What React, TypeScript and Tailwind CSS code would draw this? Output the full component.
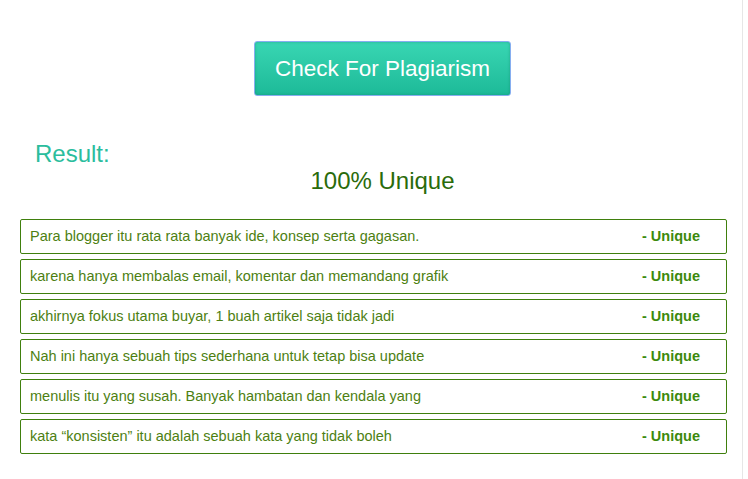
import React from "react";

const rows = [
  "Para blogger itu rata rata banyak ide, konsep serta gagasan.",
  "karena hanya membalas email, komentar dan memandang grafik",
  "akhirnya fokus utama buyar, 1 buah artikel saja tidak jadi",
  "Nah ini hanya sebuah tips sederhana untuk tetap bisa update",
  "menulis itu yang susah. Banyak hambatan dan kendala yang",
  "kata \u201ckonsisten\u201d itu adalah sebuah kata yang tidak boleh",
];

export default function App() {
  return (
    <div className="w-[748px] h-[479px] bg-white font-['Liberation_Sans',Arial,sans-serif]">
      <div className="w-[743px] h-full border-r border-[#e6e6e6] pt-[41px]">
        <div className="flex justify-center pl-[35px] pr-[12px]">
          <button className="w-[257px] h-[55px] rounded-[3px] border border-[#86aef0] bg-gradient-to-b from-[#38d6b3] to-[#1cba98] shadow-[inset_0_0_3px_rgba(0,100,80,0.35)] text-white text-[22.5px]">
            Check For Plagiarism
          </button>
        </div>
        <div className="mt-[44px] pl-[35px] text-[24px] leading-[28px] text-[#2bbd9d]">Result:</div>
        <div className="pl-[35px] pr-[12px] mt-[-1px] text-center text-[24px] leading-[28px] text-[#2a6b0b]">
          100% Unique
        </div>
        <div className="mt-[24px] pl-[20px] pr-[15px] flex flex-col gap-[5px]">
          {rows.map((r, i) => (
            <div
              key={i}
              className="h-[35px] flex items-center justify-between border border-[#3f7f0d] rounded-[2px] pl-[9px] pr-[26px] text-[14.5px]"
            >
              <span className="text-[#4d7f12]">{r}</span>
              <span className="font-bold text-[#3c8a0c]">- Unique</span>
            </div>
          ))}
        </div>
      </div>
    </div>
  );
}
